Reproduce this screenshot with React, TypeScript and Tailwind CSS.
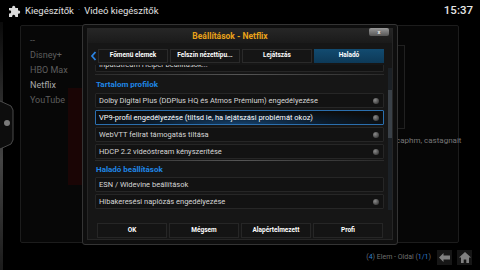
import React from "react";

function Dot() {
  return (
    <span className="w-[6px] h-[6px] rounded-full bg-[radial-gradient(circle_at_35%_35%,#8a8a8a,#444_70%)] shrink-0" />
  );
}

function Item({ text, dot = true, focus = false }: { text: string; dot?: boolean; focus?: boolean }) {
  return (
    <div
      className={
        "h-[15px] flex items-center justify-between pl-[3px] pr-[4px] border rounded-[1px] " +
        (focus
          ? "border-[#2b6fae] bg-[radial-gradient(ellipse_at_50%_100%,#15406a_0%,#0b1a29_45%,#0c0c0c_80%)] text-white"
          : "border-[#262626] bg-[#121212] text-[#d6d6d6]")
      }
    >
      <span className="text-[7.5px] leading-none whitespace-nowrap">{text}</span>
      {dot && <Dot />}
    </div>
  );
}

function Tab({ label, active = false }: { label: string; active?: boolean }) {
  return (
    <div
      className={
        "w-[70px] h-[14px] flex items-center justify-center text-[6.5px] font-bold text-white " +
        (active
          ? "bg-[linear-gradient(#124b70,#0d3957)]"
          : "bg-[#151515] border border-[#2a2a2a]")
      }
    >
      {label}
    </div>
  );
}

function Btn({ label }: { label: string }) {
  return (
    <div className="w-[70px] h-[15px] flex items-center justify-center text-[6.5px] font-bold text-white bg-[#141414] border border-[#262626]">
      {label}
    </div>
  );
}

export default function App() {
  return (
    <div className="w-[480px] h-[270px] bg-black relative overflow-hidden font-[Roboto,sans-serif]">
      {/* top bar */}
      <div className="h-[22px] flex items-center pl-[8px] pr-[7px]">
        <svg width="15" height="14" viewBox="0 0 15 14" className="shrink-0">
          <path
            d="M1 4h3.2a1.6 1.6 0 1 1 3 0H10v2.6a1.6 1.6 0 1 1 0 3V13H7.2a1.6 1.6 0 1 0-3 0H1V9.4a1.6 1.6 0 1 0 0-3z"
            fill="#dcdcdc"
          />
        </svg>
        <span className="ml-[2px] text-[9.5px] text-[#e0e0e0] whitespace-nowrap">Kiegészítők</span>
        <span className="mx-[4px] text-[9px] text-[#2a7fd4]">·</span>
        <span className="text-[9.5px] text-[#e0e0e0] whitespace-nowrap">Videó kiegészítők</span>
        <span className="ml-auto text-[11.5px] font-medium text-[#e6e6e6]">15:37</span>
      </div>

      {/* body */}
      <div className="flex h-[223px] pt-[3px]">
        <div className="w-[20px] relative">
          <div className="absolute left-0 top-[-3px] w-[3px] h-[250px] bg-[linear-gradient(#0a0a0a,#3a3a3a_45%,#444_55%,#1a1a1a)]" />
          <svg width="14" height="50" viewBox="0 0 14 50" className="mt-[75px] relative">
            <path d="M0 1 L11 6 L13 10 L13 40 L11 44 L0 49" fill="#0d0d0d" stroke="#4a4a4a" strokeWidth="1" />
            <circle cx="7" cy="23" r="3" fill="#7a7a7a" />
          </svg>
        </div>
        <div className="w-[120px] h-[218px] border border-[#1c1c1c] bg-[#070707] rounded-[2px] flex">
          <div className="w-[47px] pl-[9px] pt-[7px] flex flex-col text-[9px] leading-[15px] text-[#5e5e5e]">
            <span>--</span>
            <span>Disney+</span>
            <span>HBO Max</span>
            <span className="text-[#a8a8a8]">Netflix</span>
            <span>YouTube</span>
          </div>
          <div className="mt-[62px] w-[20px] h-[97px] bg-[#1a0505]" />
        </div>
        <div className="ml-auto mr-[21px] w-[300px] h-[218px] border border-[#1c1c1c] bg-[#060606] rounded-[2px] flex flex-col">
          <div className="ml-[220px] mt-[19px] w-[25px] h-[84px] border border-[#202020] bg-[#080808]" />
          <div className="mt-[6px] pl-[236px] whitespace-nowrap text-[8px] text-[#777]">caphm, castagnait</div>
        </div>
      </div>

      {/* bottom status */}
      <div className="h-[25px] flex items-center justify-end pr-[8px] gap-[5px]">
        <span className="text-[7px] text-[#6f6f6f] whitespace-nowrap mr-[1px]">
          (<span className="text-[#2f7fd0]">4</span>) Elem - Oldal (<span className="text-[#2f7fd0]">1/1</span>)
        </span>
        <div className="w-[15px] h-[15px] bg-[#161616] flex items-center justify-center">
          <svg width="11" height="9" viewBox="0 0 11 9">
            <path d="M0 4.5 L4.5 0 V2.5 H11 V6.5 H4.5 V9 Z" fill="#808080" />
          </svg>
        </div>
        <div className="w-[15px] h-[15px] bg-[#161616] flex items-center justify-center">
          <svg width="12" height="11" viewBox="0 0 12 11">
            <path d="M6 0 L12 5.5 H10 V11 H7.3 V7.5 H4.7 V11 H2 V5.5 H0 Z" fill="#808080" />
          </svg>
        </div>
      </div>

      {/* dialog */}
      <div className="absolute left-[82px] top-[24px] w-[316px] h-[221px] rounded-[3px] border border-[#343434] bg-[#0e0e0e] pl-[4px] pr-[4px] pt-[3px] pb-[4px]">
        <div className="h-full bg-[#161616] border border-[#262626] flex flex-col">
          {/* header */}
          <div className="h-[14px] relative flex items-center justify-center pr-[20px] bg-[linear-gradient(#262626,#1a1a1a)]">
            <span className="text-[8.5px] font-bold text-[#e9a21a]">Beállítások - Netflix</span>
            <div className="absolute right-[3px] top-[-1px] w-[20px] h-[8px] rounded-[2px] bg-[linear-gradient(#9a9a9a,#555)] flex items-center justify-center text-[6px] leading-none text-white">
              x
            </div>
          </div>
          {/* tabs */}
          <div className="mt-[6px] flex items-center h-[14px]">
            <svg width="10" height="10" viewBox="0 0 10 10" className="ml-[1px]">
              <path d="M6.5 1 L3 5 L6.5 9" fill="none" stroke="#2b82e0" strokeWidth="1.8" />
            </svg>
            <div className="flex gap-[2px] ml-[-1px]">
              <Tab label="Főmenü elemek" />
              <Tab label="Felszín nézettípu..." />
              <Tab label="Lejátszás" />
              <Tab label="Haladó" active />
            </div>
          </div>
          {/* content */}
          <div className="mt-[2px] flex h-[147px]">
            <div className="ml-[7px] w-[290px] overflow-hidden flex flex-col">
              <div className="mt-[-8px]">
                <Item text="InputStream Helper beállítások..." dot={false} />
              </div>
              <div className="mt-[2px] h-[1px] bg-[linear-gradient(90deg,#2a2a2a,#555_50%,#2a2a2a)]" />
              <div className="mt-[3px] h-[13px] flex items-center pl-[1px] text-[8px] font-bold text-[#1f86e6]">Tartalom profilok</div>
              <div className="mt-[2px] flex flex-col gap-[2px]">
                <Item text="Dolby Digital Plus (DDPlus HQ és Atmos Prémium) engedélyezése" />
                <Item text="VP9-profil engedélyezése (tiltsd le, ha lejátszási problémát okoz)" focus />
                <Item text="WebVTT felirat támogatás tiltása" />
                <Item text="HDCP 2.2 videóstream kényszerítése" />
              </div>
              <div className="mt-[1px] h-[1px] bg-[linear-gradient(90deg,#2a2a2a,#555_50%,#2a2a2a)]" />
              <div className="mt-[2px] h-[13px] flex items-center pl-[1px] text-[8px] font-bold text-[#1f86e6]">Haladó beállítások</div>
              <div className="mt-[1px] flex flex-col gap-[2px]">
                <Item text="ESN / Widevine beállítások" dot={false} />
                <Item text="Hibakeresési naplózás engedélyezése" />
              </div>
            </div>
            <div className="ml-[4px] mt-[3px] w-[4px] h-[142px] bg-[#1c2126] flex flex-col">
              <div className="mt-[22px] h-[48px] bg-[#3a4148]" />
            </div>
          </div>
          {/* buttons */}
          <div className="mt-[11px] ml-[9px] flex gap-[2px]">
            <Btn label="OK" />
            <Btn label="Mégsem" />
            <Btn label="Alapértelmezett" />
            <Btn label="Profi" />
          </div>
        </div>
      </div>
    </div>
  );
}
